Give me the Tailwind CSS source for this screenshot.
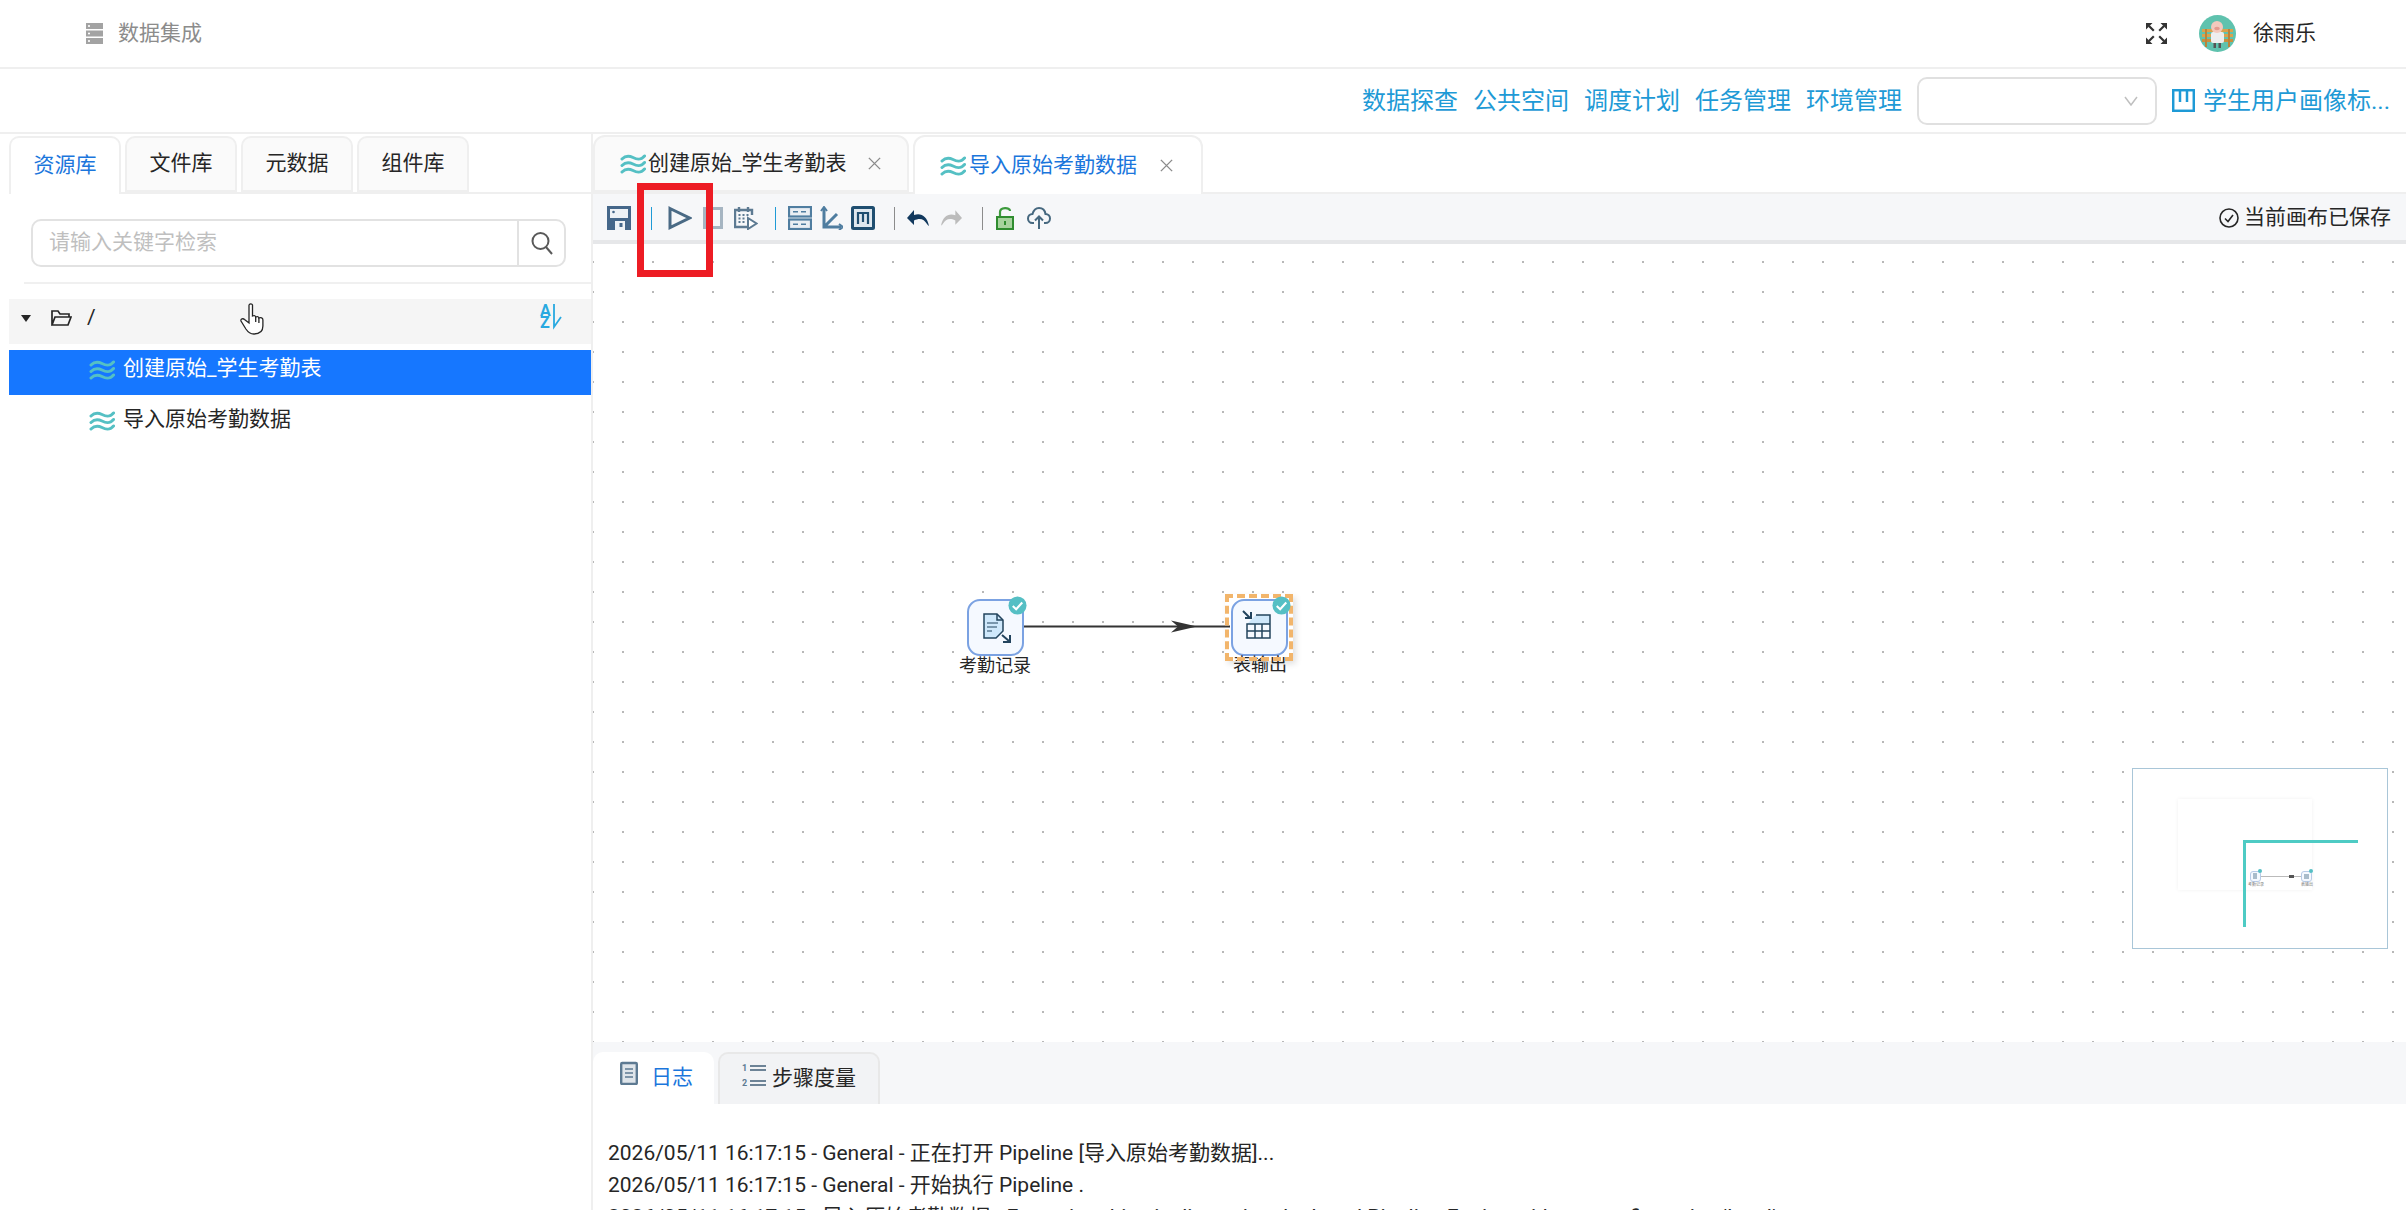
<!DOCTYPE html>
<html lang="zh">
<head>
    <meta charset="UTF-8">
    <title>数据集成</title>
    <script src="https://cdn.jsdelivr.net/npm/@tailwindcss/browser@4"></script>
</head>
<body class="relative h-[1210px] overflow-hidden bg-white text-[21px] text-[#262626] font-['Roboto','Noto_Sans_CJK_SC',sans-serif]">

<!-- shared icons -->
<svg class="hidden">
    <symbol id="waves" viewBox="0 0 26 21">
        <g fill="none" stroke="#55c0c4" stroke-width="3" stroke-linecap="round">
            <path d="M2 6C5 3 8 2 13 4.500S21 7 24.500 3"/>
            <path d="M2 12.500C5 9.500 8 8.500 13 11S21 13.500 24.500 9.500"/>
            <path d="M2 19C5 16 8 15 13 17.500S21 20 24.500 16"/>
        </g>
    </symbol>
    <symbol id="check" viewBox="0 0 20 20">
        <circle cx="10" cy="10" r="9.500" fill="#55bfc4"/>
        <path d="M5 10.500l3.600 3.400L15 6.800" fill="none" stroke="#fff" stroke-width="2.200"/>
    </symbol>
    <symbol id="close" viewBox="0 0 16 16">
        <path d="M2 2l12 12M14 2L2 14" stroke="#8c8c8c" stroke-width="1.500"/>
    </symbol>
</svg>

<!-- top bar -->
<header class="flex h-[69px] items-center border-b-2 border-[#efefef] pl-[86px] pr-[90px]">
    <svg class="w-[17px] h-[21px]" viewBox="0 0 17 21">
        <rect width="17" height="6" fill="#a3a3a3"/><rect y="7.500" width="17" height="6" fill="#a3a3a3"/><rect y="15" width="17" height="6" fill="#a3a3a3"/>
        <rect x="2" y="2.200" width="2" height="1.600" fill="#fff"/><rect x="2" y="9.700" width="2" height="1.600" fill="#fff"/><rect x="2" y="17.200" width="2" height="1.600" fill="#fff"/>
    </svg>
    <span class="ml-[15px] text-[#8c8c8c]">数据集成</span>
    <svg class="ml-auto w-[21px] h-[21px]" viewBox="0 0 21 21" fill="#333" stroke="#333">
        <path d="M0 0h6.500L0 6.500zM21 0h-6.500L21 6.500zM0 21h6.500L0 14.500zM21 21h-6.500L21 14.500z" stroke="none"/>
        <path d="M3 3l4.800 4.800M18 3l-4.800 4.800M3 18l4.800-4.800M18 18l-4.800-4.800" stroke-width="2.200"/>
    </svg>
    <svg class="ml-[32px] w-[37px] h-[37px]" viewBox="0 0 37 37">
        <clipPath id="av"><circle cx="18.500" cy="18.500" r="18.500"/></clipPath>
        <g clip-path="url(#av)">
            <rect width="37" height="37" fill="#5fc2ae"/>
            <rect x="3" y="14" width="31" height="3" fill="#d9a24e"/><rect x="3" y="19" width="31" height="3" fill="#d9a24e"/><rect x="3" y="24" width="31" height="3" fill="#c98f3f"/>
            <rect x="6" y="14" width="2" height="18" fill="#b9843a"/><rect x="29" y="14" width="2" height="18" fill="#b9843a"/>
            <rect x="12" y="17" width="13" height="11" rx="2" fill="#eeeeee"/>
            <circle cx="18" cy="12" r="6" fill="#f3c9bd"/>
            <ellipse cx="18" cy="13.500" rx="2.800" ry="1.800" fill="#e59a8e"/>
            <rect x="14.500" y="28" width="2.500" height="5" fill="#555"/><rect x="19.500" y="28" width="2.500" height="5" fill="#555"/>
        </g>
    </svg>
    <span class="ml-[17px]">徐雨乐</span>
</header>

<!-- link bar -->
<div class="flex h-[65px] items-center justify-end gap-[15px] border-b-2 border-[#efefef] pr-[21px] text-[24px] text-[#1e9ad6]">
    <a>数据探查</a>
    <a>公共空间</a>
    <a>调度计划</a>
    <a>任务管理</a>
    <a>环境管理</a>
    <div class="flex h-[48px] w-[240px] items-center justify-end rounded-[10px] border-2 border-[#e0e0e0] pr-[17px]">
        <svg class="w-[14px] h-[10px]" viewBox="0 0 14 10"><path d="M1 1l6 8 6-8" fill="none" stroke="#bfbfbf" stroke-width="1.500"/></svg>
    </div>
    <a class="flex items-center">
        <svg class="w-[23px] h-[23px]" viewBox="0 0 23 23" fill="none" stroke="#1e9ad6" stroke-width="2.500"><rect x="1.200" y="1.200" width="20.600" height="20.600"/><path d="M8 2v11M15 2v11"/></svg>
        <span class="ml-[8px] w-[182px] whitespace-nowrap">学生用户画像标...</span>
    </a>
</div>

<div class="flex h-[1076px]">
    <!-- left panel -->
    <aside class="w-[593px] shrink-0 border-r-2 border-[#efefef] pl-[9px]">
        <div class="flex h-[60px] gap-[4px] border-b-2 border-[#efefef] pt-[2px]">
            <div class="flex w-[112px] items-center justify-center rounded-t-[10px] border-2 border-b-0 border-[#efefef] bg-white text-[#1b76dc] -mb-[2px]">资源库</div>
            <div class="flex w-[112px] items-center justify-center rounded-t-[10px] border-2 border-[#efefef] bg-[#fafafa]">文件库</div>
            <div class="flex w-[112px] items-center justify-center rounded-t-[10px] border-2 border-[#efefef] bg-[#fafafa]">元数据</div>
            <div class="flex w-[112px] items-center justify-center rounded-t-[10px] border-2 border-[#efefef] bg-[#fafafa]">组件库</div>
        </div>
        <div class="ml-[22px] mt-[25px] flex h-[48px] w-[535px] rounded-[10px] border-2 border-[#e2e2e2]">
            <div class="flex flex-1 items-center pl-[16px] text-[#bfbfbf]">请输入关键字检索</div>
            <div class="flex w-[47px] items-center justify-center border-l-2 border-[#e2e2e2]">
                <svg class="w-[22px] h-[24px]" viewBox="0 0 22 24" fill="none" stroke="#595959" stroke-width="2"><circle cx="9.500" cy="10" r="8"/><path d="M15 16l6 7"/></svg>
            </div>
        </div>
        <div class="ml-[15px] mt-[15px] h-[2px] bg-[#f0f0f0]"></div>

        <div class="relative mt-[15px] flex h-[45px] items-center bg-[#f5f5f5] pb-[7px] pl-[12px]">
            <svg class="w-[10px] h-[7px]" viewBox="0 0 10 7"><path d="M0 0h10L5 7z" fill="#262626"/></svg>
            <svg class="ml-[20px] w-[21px] h-[16px]" viewBox="0 0 21 16" fill="none" stroke="#262626" stroke-width="1.700"><path d="M1 15V1h6l2 3h9v3M1 15h16l3-8H4z"/></svg>
            <span class="ml-[15px]">/</span>
            <svg class="absolute left-[231px] top-[4px] w-[26px] h-[32px]" viewBox="0 0 26 32" fill="#fff" stroke="#262626" stroke-width="1.300"><path d="M9 2c1-1.500 3-1.500 3.500 0v11c2-1 3 0 3.200 1 2-1 3 0 3.200 1 2-1 4 0 4 2v6c0 5-3 8-9 8-4 0-6-2-8-5L1 18c-.5-2 2-3 3.500-1.500L9 20z"/><path d="M15.700 14v5M18.900 15v5" fill="none"/></svg>
            <svg class="absolute left-[531px] top-[0px] w-[24px] h-[40px] overflow-visible" viewBox="0 0 24 40">
                <text x="0" y="17" font-size="16" font-weight="700" fill="#29a9e0">A</text>
                <text x="0" y="29" font-size="16" font-weight="700" fill="#29a9e0">Z</text>
                <path d="M14 5v23l7-10" fill="none" stroke="#29a9e0" stroke-width="1.800"/>
            </svg>
        </div>
        <div class="mt-[6px] flex h-[45px] items-center bg-[#1677ff] pb-[7px] pl-[80px] text-white">
            <svg class="w-[26px] h-[21px]"><use href="#waves"/></svg>
            <span class="ml-[8px]">创建原始_学生考勤表</span>
        </div>
        <div class="mt-[6px] flex h-[45px] items-center pb-[7px] pl-[80px]">
            <svg class="w-[26px] h-[21px]"><use href="#waves"/></svg>
            <span class="ml-[8px]">导入原始考勤数据</span>
        </div>
    </aside>

    <!-- work area -->
    <main class="flex min-w-0 flex-1 flex-col">
        <div class="flex h-[60px] shrink-0 gap-[4px] border-b-2 border-[#efefef] pt-[1px]">
            <div class="flex w-[316px] items-center rounded-t-[12px] border-2 border-[#efefef] bg-[#fafafa] pl-[25px]">
                <svg class="w-[26px] h-[21px]"><use href="#waves"/></svg>
                <span class="ml-[2px]">创建原始_学生考勤表</span>
                <svg class="ml-[21px] w-[15px] h-[15px]"><use href="#close"/></svg>
            </div>
            <div class="-mb-[2px] flex w-[290px] items-center rounded-t-[12px] border-2 border-b-0 border-[#efefef] bg-white pl-[25px] text-[#1b76dc]">
                <svg class="w-[26px] h-[21px]"><use href="#waves"/></svg>
                <span class="ml-[3px]">导入原始考勤数据</span>
                <svg class="ml-[22px] w-[15px] h-[15px]"><use href="#close"/></svg>
            </div>
        </div>

        <!-- toolbar -->
        <div class="flex h-[50px] shrink-0 items-center border-b-[4px] border-[#e6e7e9] bg-[#f6f7f9] pl-[14px] pt-[2px]">
            <svg class="w-[24px] h-[24px]" viewBox="0 0 24 24"><rect width="24" height="24" fill="#45678a"/><rect x="3" y="3" width="18" height="9" fill="#eef2f6"/><circle cx="6.500" cy="6" r="1.300" fill="#45678a"/><rect x="8" y="15" width="10" height="9" fill="#eef2f6"/><rect x="12.500" y="17" width="3" height="4" fill="#45678a"/></svg>
            <i class="ml-[20px] h-[23px] w-px bg-[#1e9ad6]"></i>
            <svg class="ml-[16px] w-[24px] h-[24px]" viewBox="0 0 24 24"><path d="M2 2.500L21.500 12 2 21.500z" fill="none" stroke="#4a6a85" stroke-width="3"/></svg>
            <svg class="ml-[11px] w-[20px] h-[22px]" viewBox="0 0 20 22"><rect x="1.500" y="1.500" width="17" height="19" fill="none" stroke="#a6b5c2" stroke-width="3"/></svg>
            <svg class="ml-[11px] w-[24px] h-[24px]" viewBox="0 0 24 24" fill="none" stroke="#5d7a92" stroke-width="2.400"><path d="M14 21H1V4h17v5"/><path d="M5 1v5M14 1v5"/><path d="M4.500 9h2M8.500 9h2M12.500 9h2M4.500 12.500h2M8.500 12.500h2M4.500 16h2M8.500 16h2" stroke-width="1.800"/><path d="M14 12l8.500 5.500L14 23z" fill="#fff" stroke="#5d7a92" stroke-width="2"/></svg>
            <i class="ml-[17px] h-[23px] w-px bg-[#1e9ad6]"></i>
            <svg class="ml-[12px] w-[24px] h-[24px]" viewBox="0 0 24 24" fill="none"><rect x="1" y="1" width="22" height="9.500" fill="#e9eef3" stroke="#4f7da0" stroke-width="2.200"/><rect x="1" y="13.500" width="22" height="9.500" fill="#e9eef3" stroke="#4f7da0" stroke-width="2.200"/><path d="M5 5.700h5M13 5.700h5M5 18.200h5M13 18.200h5" stroke="#4f7da0" stroke-width="1.600"/></svg>
            <svg class="ml-[8px] w-[23px] h-[24px]" viewBox="0 0 23 24" fill="none" stroke="#4f7da0" stroke-width="3"><path d="M4 2v19h17M4 21L17 8"/><path d="M1 5l3-4 3 4M19 18l4 3-4 3" stroke-width="2"/></svg>
            <svg class="ml-[8px] w-[24px] h-[24px]" viewBox="0 0 24 24" fill="none"><rect width="24" height="24" rx="2.500" fill="#1f4e70"/><rect x="3" y="3" width="18" height="18" fill="#dfe8ef"/><path d="M7 18V7h10v11M12 7v9" stroke="#1f4e70" stroke-width="2.200"/></svg>
            <i class="ml-[19px] h-[23px] w-px bg-[#8c8c8c]"></i>
            <svg class="ml-[12px] w-[22px] h-[18px]" viewBox="0 0 22 18"><path d="M7 6V1L0 9l7 7v-4.500C13 8.500 17 10 20 15c1 1.500 2 2 2 2C20 7 14 3.500 7 6z" fill="#12395e"/></svg>
            <svg class="ml-[12px] w-[21px] h-[18px]" viewBox="0 0 22 18"><path d="M15 6V1l7 8-7 7v-4.500C9 8.500 5 10 2 15c-1 1.500-2 2-2 2C2 7 8 3.500 15 6z" fill="#bcbcbc"/></svg>
            <i class="ml-[20px] h-[23px] w-px bg-[#8c8c8c]"></i>
            <svg class="ml-[13px] w-[18px] h-[23px]" viewBox="0 0 18 23"><path d="M4 10V5c0-5 10-5 10-1" fill="none" stroke="#3c9a3c" stroke-width="2.200"/><rect x="1" y="10" width="16" height="12" fill="#a7d39e" stroke="#2f8c2f" stroke-width="2"/><rect x="8" y="14" width="2" height="4" fill="#2f8c2f"/></svg>
            <svg class="ml-[13px] w-[24px] h-[22px]" viewBox="0 0 24 22" fill="none" stroke="#46687f" stroke-width="2"><path d="M7 16H5.500C2.500 16 1 13.500 1 11.500 1 9 3 7 5.500 7 6.500 3.500 9 1 12 1c3.500 0 6 2.500 6.500 6 2.500 0 4.500 2 4.500 4.500S21 16 18.500 16H17"/><path d="M12 22V10M8 13.500l4-4 4 4"/></svg>
            <div class="ml-auto flex items-center pr-[15px]">
                <svg class="w-[20px] h-[20px]" viewBox="0 0 20 20" fill="none" stroke="#262626" stroke-width="1.600"><circle cx="10" cy="10" r="9"/><path d="M6 10.500l3 3 5-6.500"/></svg>
                <span class="ml-[5px]">当前画布已保存</span>
            </div>
        </div>

        <!-- canvas -->
        <div class="relative min-h-0 flex-1 bg-white bg-[radial-gradient(circle,#a8a8a8_0.6px,transparent_1.2px)] bg-[length:30px_30px] bg-[position:-15px_3px]">
            <svg class="absolute left-[429px] top-[370px] w-[212px] h-[24px]" viewBox="0 0 212 24">
                <path d="M0 12.500h208" stroke="#333" stroke-width="2"/>
                <path d="M149 6.500l26 6-26 6 7-6z" fill="#333"/>
            </svg>
            <div class="absolute left-[374px] top-[355px] h-[57px] w-[57px] rounded-[13px] border-2 border-[#7ba2e2] bg-[#f5f9ff]">
                <svg class="ml-[13px] mt-[11px] w-[30px] h-[32px]" viewBox="0 0 30 32" fill="none" stroke="#23445e" stroke-width="1.500"><path d="M2 2h13l6 6v11l-7 7H2z" fill="#cfe8fb"/><path d="M15 2v6h6"/><path d="M5 11h11M5 15h10M5 19h5" stroke-width="1"/><path d="M20 23l7 6M28 23v7h-7" stroke-width="2"/></svg>
            </div>
            <svg class="absolute left-[415px] top-[352px] w-[19px] h-[19px]"><use href="#check"/></svg>
            <span class="absolute left-[366px] top-[410px] text-[18px] leading-[24px]">考勤记录</span>

            <div class="absolute left-[638px] top-[355px] h-[57px] w-[57px] rounded-[13px] border-2 border-[#7ba2e2] bg-[#f5f9ff]">
                <svg class="ml-[9px] mt-[9px] w-[32px] h-[32px]" viewBox="0 0 32 32" fill="none" stroke="#23445e" stroke-width="1.500"><path d="M5 14L14 5H28V14z" fill="#cfe8fb" stroke="none"/><path d="M14 5H28V28H5V14H28M5 21H28M13 14V28M20 14V28"/><path d="M1 1l7 7M9 2v6H3" stroke-width="2"/></svg>
            </div>
            <span class="absolute left-[640px] top-[409px] text-[18px] leading-[24px]">表输出</span>
            <div class="absolute left-[632px] top-[350px] h-[67px] w-[68px] border-[4px] border-dashed border-[#f2b56b] shadow-[3px_3px_6px_rgba(0,0,0,0.12)]"></div>
            <svg class="absolute left-[679px] top-[352px] w-[19px] h-[19px]"><use href="#check"/></svg>

            <!-- minimap -->
            <div class="absolute left-[1539px] top-[524px] h-[181px] w-[256px] border-[1.500px] border-[#a9c6d8] bg-white">
                <div class="absolute left-[45px] top-[30px] h-[91px] w-[134px] shadow-[0_0_4px_rgba(0,0,0,0.06)]"></div>
                <div class="absolute left-[126px] top-[107px] h-[1px] w-[44px] bg-[#bbb]"></div>
                <div class="absolute left-[156px] top-[106px] h-[3px] w-[5px] bg-[#555]"></div>
                <div class="absolute left-[117px] top-[102px] h-[11px] w-[11px] rounded-[3px] border border-[#b7cbe8] bg-[#f5f9ff]"><div class="ml-[2px] mt-[1px] h-[6px] w-[4px] bg-[#a9bccb]"></div></div>
                <div class="absolute left-[168px] top-[102px] h-[11px] w-[11px] rounded-[3px] border border-[#b7cbe8] bg-[#f5f9ff]"><div class="ml-[2px] mt-[2px] h-[5px] w-[5px] bg-[#a9bccb]"></div></div>
                <div class="absolute left-[125px] top-[100px] h-[4px] w-[4px] rounded-full bg-[#55bfc4]"></div>
                <div class="absolute left-[176px] top-[100px] h-[4px] w-[4px] rounded-full bg-[#55bfc4]"></div>
                <span class="absolute left-[115px] top-[113px] text-[4px] leading-[5px] text-[#777]">考勤记录</span>
                <span class="absolute left-[168px] top-[113px] text-[4px] leading-[5px] text-[#777]">表输出</span>
                <div class="absolute left-[110px] top-[71px] h-[87px] w-[3px] bg-[#4ecbc4]"></div>
                <div class="absolute left-[110px] top-[71px] h-[3px] w-[115px] bg-[#4ecbc4]"></div>
            </div>
        </div>

        <!-- log panel -->
        <div class="h-[168px] shrink-0 overflow-hidden">
            <div class="flex h-[62px] items-end gap-[4px] bg-[#f6f7f9]">
                <div class="flex h-[52px] w-[121px] items-center rounded-t-[10px] bg-white pl-[27px] text-[#1b76dc]">
                    <svg class="-mt-[10px] w-[18px] h-[24px]" viewBox="0 0 18 24" fill="#dfe5ea" stroke="#5d7a92" stroke-width="2.400"><rect x="1.200" y="2" width="15.600" height="21" rx="1"/><path d="M5 8h8M5 12h8M5 16h8" stroke-width="1.600"/></svg>
                    <span class="ml-[13px]">日志</span>
                </div>
                <div class="flex h-[52px] w-[162px] items-center rounded-t-[10px] border-2 border-b-0 border-[#e8e8e8] bg-[#f2f3f5] pl-[22px]">
                    <svg class="-mt-[8px] w-[24px] h-[25px]" viewBox="0 0 24 25"><path d="M8 3h16M8 7h16M8 18h16M8 22h16" stroke="#6d8396" stroke-width="2"/><text x="0" y="8" font-size="9" font-weight="700" fill="#5d7a92">1</text><text x="0" y="23" font-size="9" font-weight="700" fill="#5d7a92">2</text></svg>
                    <span class="ml-[6px]">步骤度量</span>
                </div>
            </div>
            <div class="pl-[15px] pt-[33px] text-[21px] leading-[32px] whitespace-nowrap">
                <p>2026/05/11 16:17:15 - General - 正在打开 Pipeline [导入原始考勤数据]...</p>
                <p>2026/05/11 16:17:15 - General - 开始执行 Pipeline .</p>
                <p>2026/05/11 16:17:15 - 导入原始考勤数据 - Executing this pipeline using the Local Pipeline Engine with run configuration 'local'</p>
            </div>
        </div>
    </main>
</div>

<!-- red annotation box over the toolbar -->
<div class="absolute left-[637px] top-[183px] h-[94px] w-[76px] border-[7px] border-[#ed1c24]"></div>

</body>
</html>
